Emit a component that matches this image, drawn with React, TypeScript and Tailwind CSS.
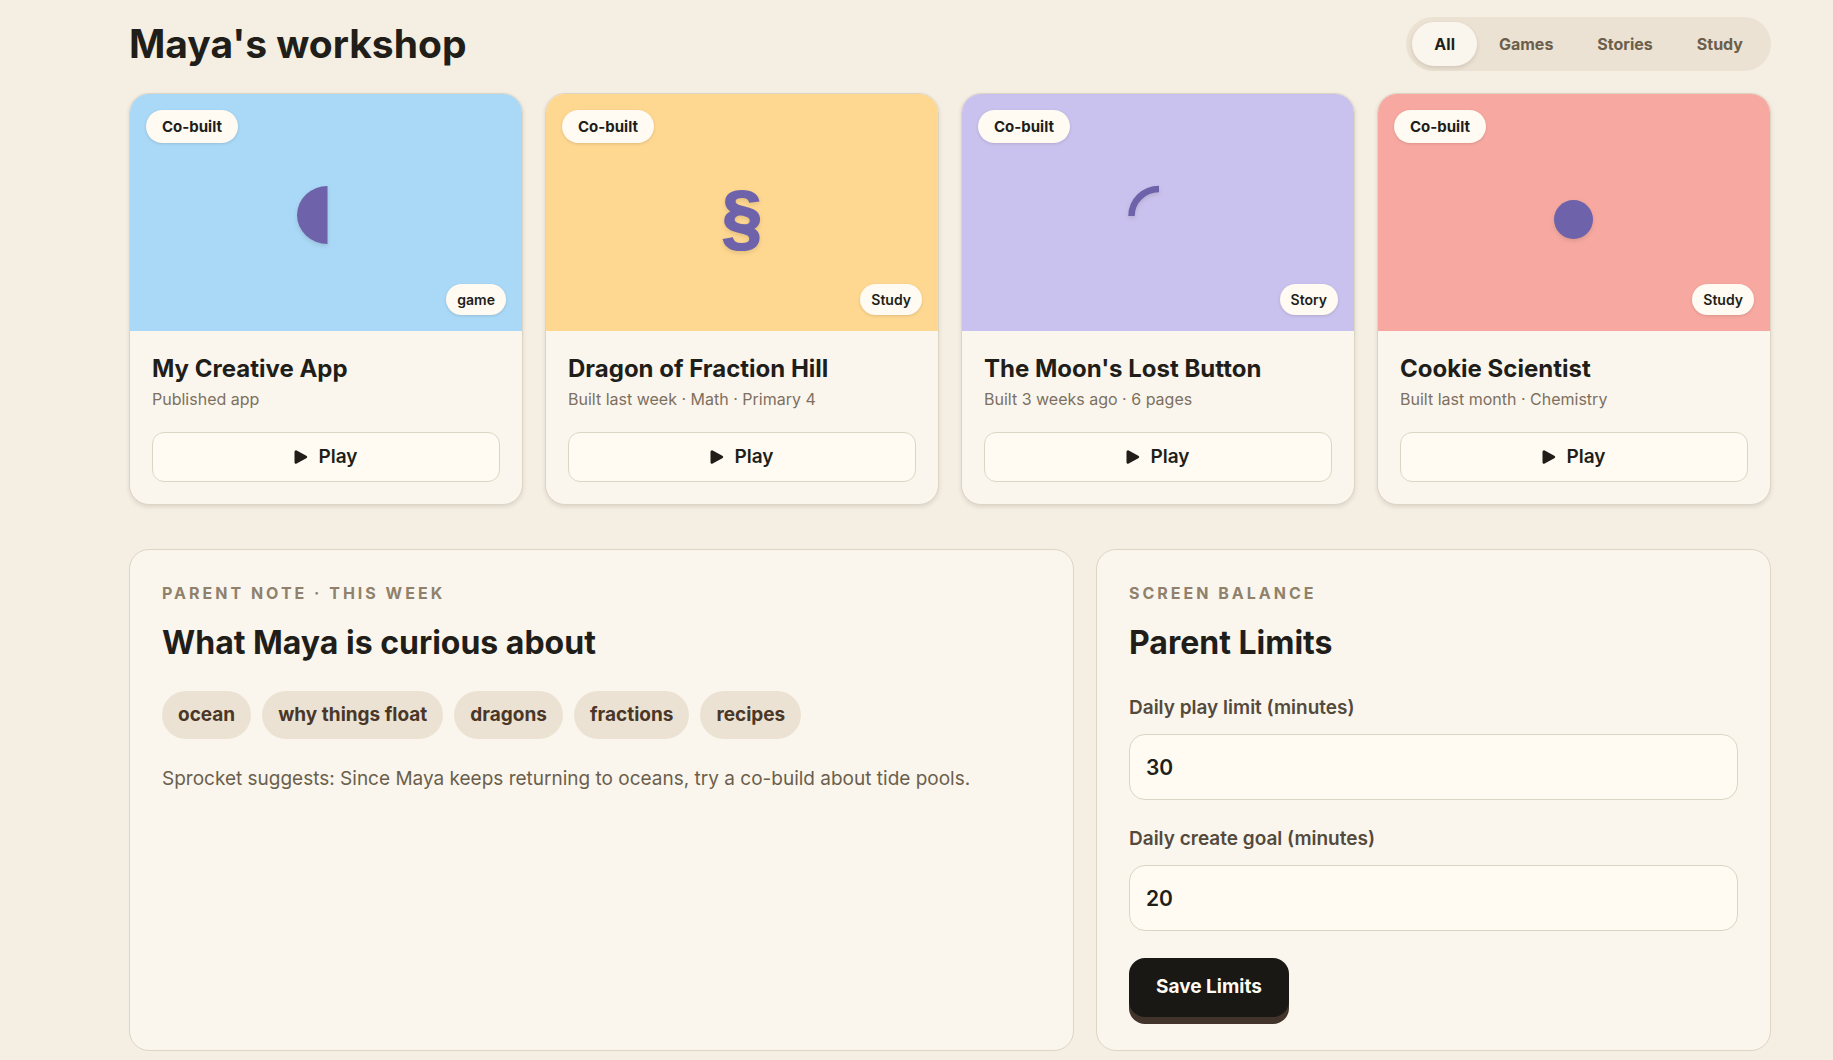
import React, { useState } from "react";

type Project = {
  title: string;
  meta: string;
  kind: string;
  cover: string;
  art: React.ReactNode;
};

const artClass = "h-[70px] w-[70px] text-[#6e63aa] drop-shadow-[0_2px_2px_rgba(60,45,30,0.14)]";

const projects: Project[] = [
  {
    title: "My Creative App",
    meta: "Published app",
    kind: "game",
    cover: "bg-[#a9d9f7]",
    art: (
      <svg viewBox="0 0 70 70" className={artClass} aria-hidden="true">
        <path d="M36.5 8A30.5 29 0 0 0 36.5 66Z" fill="currentColor" />
      </svg>
    ),
  },
  {
    title: "Dragon of Fraction Hill",
    meta: "Built last week · Math · Primary 4",
    kind: "Study",
    cover: "bg-[#fed891]",
    art: (
      <span
        aria-hidden="true"
        className="pt-2 font-['Liberation_Sans',sans-serif] text-[72px] leading-none font-bold text-[#6e63aa] drop-shadow-[0_2px_2px_rgba(60,45,30,0.14)] [-webkit-text-stroke:2px_#6e63aa]"
      >
        §
      </span>
    ),
  },
  {
    title: "The Moon's Lost Button",
    meta: "Built 3 weeks ago · 6 pages",
    kind: "Story",
    cover: "bg-[#cac2ee]",
    art: (
      <svg viewBox="0 0 70 70" className={artClass} aria-hidden="true">
        <path d="M8.5 38A27.5 27 0 0 1 36 11" fill="none" stroke="currentColor" strokeWidth="6.5" />
      </svg>
    ),
  },
  {
    title: "Cookie Scientist",
    meta: "Built last month · Chemistry",
    kind: "Study",
    cover: "bg-[#f7a9a1]",
    art: (
      <svg viewBox="0 0 70 70" className={artClass} aria-hidden="true">
        <circle cx="34.5" cy="41.5" r="19.5" fill="currentColor" />
      </svg>
    ),
  },
];

const filters = ["All", "Games", "Stories", "Study"];
const topics = ["ocean", "why things float", "dragons", "fractions", "recipes"];

function ProjectCard({ project }: { project: Project }) {
  return (
    <article className="overflow-hidden rounded-[20px] border border-[#ddd5c4] bg-[#faf6ee] shadow-[0_2px_4px_rgba(60,45,30,0.12)]">
      <div className={`relative flex h-[237px] items-center justify-center ${project.cover}`}>
        <span className="absolute top-4 left-4 rounded-full bg-[#fffbf2] px-4 text-[15px] leading-[33px] font-bold shadow-[0_1px_3px_rgba(60,45,30,0.16)]">
          Co-built
        </span>
        {project.art}
        <span className="absolute right-4 bottom-4 rounded-full bg-[#fffbf2] px-[11px] text-[14px] leading-[31px] font-semibold shadow-[0_1px_3px_rgba(60,45,30,0.16)]">
          {project.kind}
        </span>
      </div>
      <div className="px-[22px] pt-[22px] pb-[22px]">
        <h2 className="text-[24px] leading-8 font-bold">{project.title}</h2>
        <p className="mt-0.5 text-[16px] leading-6 text-[#7d705f]">{project.meta}</p>
        <button
          type="button"
          className="mt-[21px] flex h-[50px] w-full items-center justify-center gap-2.5 rounded-xl border border-[#ddd5c4] bg-[#fffbf2] text-[19px] font-semibold"
        >
          <svg viewBox="0 0 14 14" className="h-3.5 w-3.5" aria-hidden="true">
            <path
              d="M2 1.8L11.6 7L2 12.2Z"
              fill="currentColor"
              stroke="currentColor"
              strokeWidth="3"
              strokeLinejoin="round"
            />
          </svg>
          Play
        </button>
      </div>
    </article>
  );
}

function Panel({ eyebrow, title, children }: { eyebrow: string; title: string; children: React.ReactNode }) {
  return (
    <section className="rounded-[20px] border border-[#ddd5c4] bg-[#faf6ee] px-8 pt-[31px] pb-[26px]">
      <p className="text-[16px] leading-6 font-bold tracking-[3px] text-[#8f816c] uppercase">{eyebrow}</p>
      <h2 className="mt-[18px] text-[32px] leading-10 font-bold">{title}</h2>
      {children}
    </section>
  );
}

function LimitField({ id, label, initial }: { id: string; label: string; initial: string }) {
  return (
    <div className="flex flex-col gap-3">
      <label htmlFor={id} className="text-[19px] leading-7 font-semibold text-[#544a3c]">
        {label}
      </label>
      <input
        id={id}
        type="text"
        inputMode="numeric"
        defaultValue={initial}
        className="h-[66px] w-full rounded-2xl border border-[#ddd5c4] bg-[#fffbf2] px-4 text-[21px] font-semibold"
      />
    </div>
  );
}

export default function App() {
  const [active, setActive] = useState("All");
  return (
    <div className="min-h-screen bg-[#f5eee2] pt-[17px] pr-[62px] pb-2 pl-[129px] font-['Inter','Liberation_Sans',sans-serif] text-[#211e1a]">
      <header className="flex items-center justify-between">
        <h1 className="text-[39px] leading-[54px] font-bold">Maya's workshop</h1>
        <nav aria-label="Filter projects" className="flex rounded-full bg-[#ebe2d3] px-1.5 py-[5px]">
          {filters.map((name) => (
            <button
              key={name}
              type="button"
              aria-pressed={active === name}
              onClick={() => setActive(name)}
              className={
                active === name
                  ? "h-11 rounded-full bg-[#faf6ee] px-[22px] text-[16px] font-bold shadow-[0_2px_4px_rgba(60,45,30,0.14)]"
                  : "h-11 rounded-full px-[22px] text-[16px] font-bold text-[#6b5f4c]"
              }
            >
              {name}
            </button>
          ))}
        </nav>
      </header>

      <main>
        <div className="mt-[22px] grid grid-cols-4 gap-[22px]">
          {projects.map((project) => (
            <ProjectCard key={project.title} project={project} />
          ))}
        </div>

        <div className="mt-11 grid grid-cols-[7fr_5fr] gap-[22px]">
          <Panel eyebrow="Parent note · this week" title="What Maya is curious about">
            <ul className="mt-7 flex flex-wrap gap-[11px]">
              {topics.map((topic) => (
                <li
                  key={topic}
                  className="rounded-full bg-[#ebe2d3] px-4 text-[19px] leading-[48px] font-bold text-[#4a3728]"
                >
                  {topic}
                </li>
              ))}
            </ul>
            <p className="mt-[26px] text-[19px] leading-7 text-[#6b5f4c]">
              Sprocket suggests: Since Maya keeps returning to oceans, try a co-build about tide pools.
            </p>
          </Panel>

          <Panel eyebrow="Screen balance" title="Parent Limits">
            <form className="mt-[31px] flex flex-col gap-[25px]" onSubmit={(e) => e.preventDefault()}>
              <LimitField id="play-limit" label="Daily play limit (minutes)" initial="30" />
              <LimitField id="create-goal" label="Daily create goal (minutes)" initial="20" />
              <button
                type="submit"
                className="mt-0.5 mb-[7px] h-[59px] self-start rounded-2xl bg-[#1a1814] px-[27px] text-[19px] font-bold text-[#fffbf2] shadow-[0_7px_0_#42342a]"
              >
                Save Limits
              </button>
            </form>
          </Panel>
        </div>
      </main>
    </div>
  );
}
